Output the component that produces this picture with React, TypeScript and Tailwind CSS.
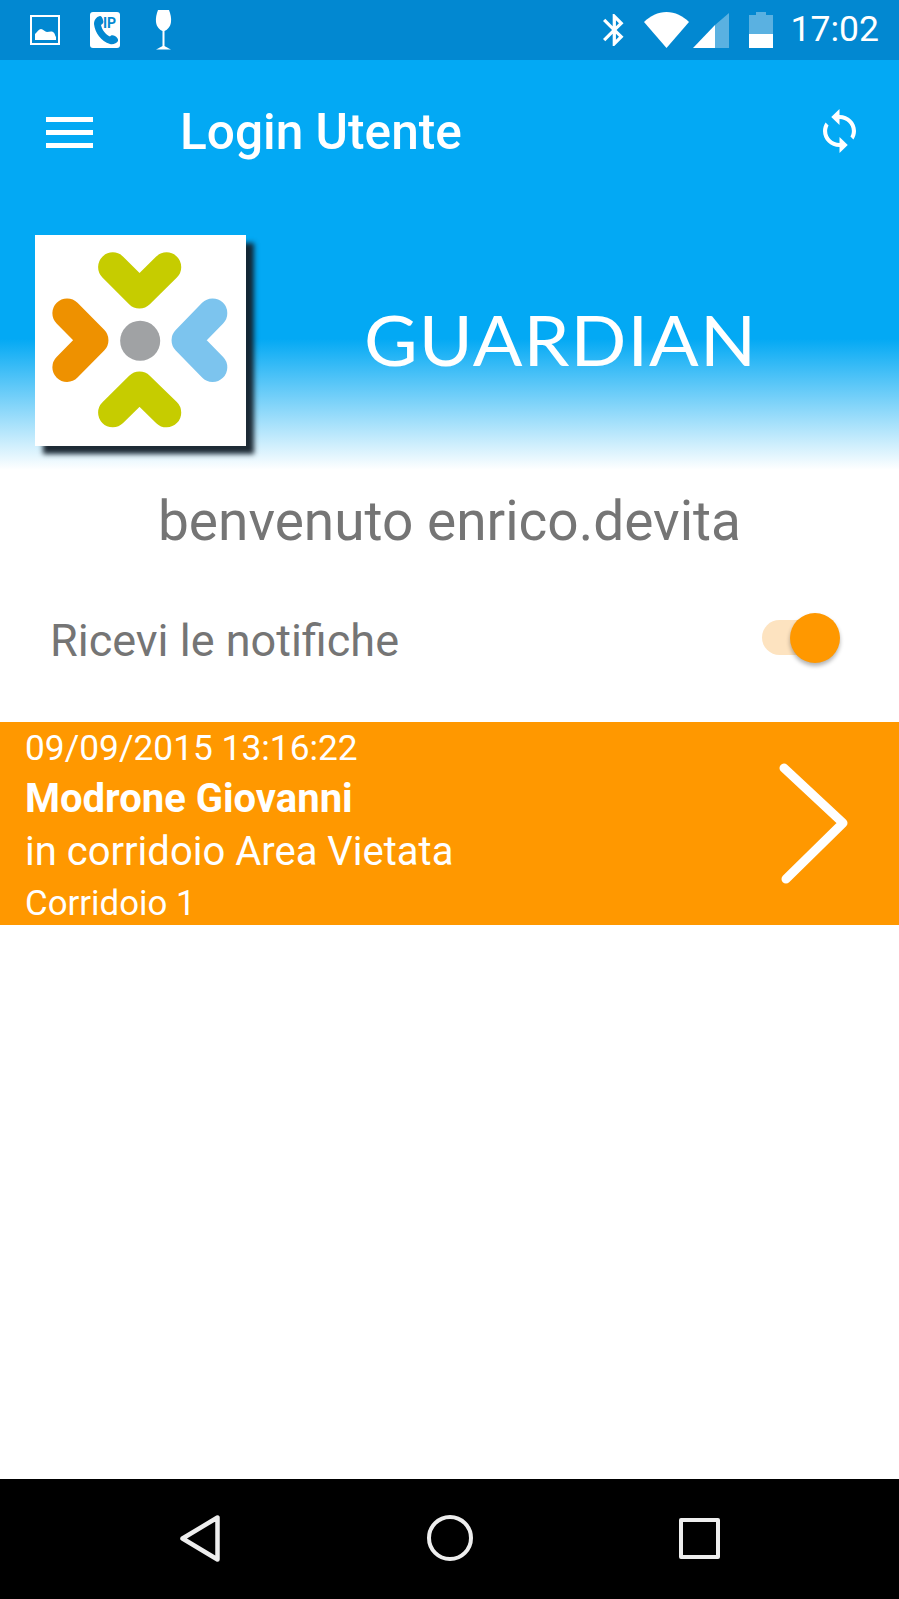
import React from "react";

function ImageIcon() {
  return (
    <svg width="31" height="31" viewBox="0 0 31 31" className="ml-[30px]">
      <rect x="1" y="1" width="28" height="28" fill="none" stroke="white" strokeWidth="2" />
      <path d="M5 25V19C7 17 9 14 11 14C13 14 15 17 17 17C19 17 21 16 23 17C25 18 25 21 26 22V25Z" fill="white" />
    </svg>
  );
}

function VoipIcon() {
  return (
    <svg width="31" height="36" viewBox="0 0 31 36" className="ml-[29px]">
      <rect width="30" height="36" rx="3" fill="white" />
      <path
        d="M10 4C6 5 4 8 4 12C5 21 11 29 20 32C23 33 27 31 28 29C28.500 27 27 25 25 24C23 23 21 23 20 24.500C16 23 12 18 11 13C13 12 14 10 13 8C12.500 6 11.500 4 10 4Z"
        fill="#0288d1"
      />
      <text x="13" y="16" fill="#0288d1" fontFamily="Roboto, sans-serif" fontWeight="700" fontSize="14">
        IP
      </text>
    </svg>
  );
}

function WineIcon() {
  return (
    <svg width="17" height="40" viewBox="0 0 17 40" className="ml-[34px]">
      <path
        d="M3 0H14C15.500 4 16.500 8 16 12C15.500 17 12 20 9.500 21V36C11 37 13 38 16 39.500H1C4 38 6 37 7.500 36V21C5 20 1.500 17 1 12C0.500 8 1.500 4 3 0Z"
        fill="white"
      />
    </svg>
  );
}

function StatusRight() {
  return (
    <div className="ml-auto flex items-center pr-[20px]">
      <svg width="21" height="32" viewBox="5 2 13 20" preserveAspectRatio="none">
        <path
          d="M17.710 7.710L12 2h-1v7.590L6.410 5 5 6.410 10.590 12 5 17.590 6.410 19 11 14.410V22h1l5.710-5.710-4.300-4.290 4.300-4.290zM13 5.830l1.880 1.880L13 9.590V5.830zm1.880 10.460L13 18.170v-3.760l1.880 1.880z"
          fill="white"
        />
      </svg>
      <svg width="45" height="36" viewBox="0 0 45 36" className="ml-[20px]">
        <path d="M0 10C6 4 14 0 22.500 0C31 0 39 4 45 10L22.500 36Z" fill="white" />
      </svg>
      <svg width="36" height="35" viewBox="0 0 36 35" className="ml-[4px]">
        <path d="M36 0V35H22V12Z" fill="white" fillOpacity="0.35" />
        <path d="M0 35L22 12V35Z" fill="white" />
      </svg>
      <svg width="24" height="36" viewBox="0 0 24 36" className="ml-[20px]">
        <path d="M7 0H17V3H24V22H0V3H7Z" fill="white" fillOpacity="0.35" />
        <rect y="22" width="24" height="14" fill="white" />
      </svg>
      <span className="ml-[18px] text-[35.500px] leading-none text-white">17:02</span>
    </div>
  );
}

function GuardianLogo() {
  return (
    <div className="h-[211px] w-[211px] shrink-0 bg-white shadow-[8px_8px_5px_rgba(20,32,42,0.95)]">
      <svg width="211" height="211" viewBox="45 45 632 632" fill="none" strokeWidth="88" strokeLinecap="round" strokeLinejoin="round">
        <path d="M278 141L358 221L439 141" stroke="#c6cc00" />
        <path d="M141 279L221 360L141 441" stroke="#ee9100" />
        <path d="M577 279L498 360L577 441" stroke="#7cc4ee" />
        <path d="M278 577L358 498L439 577" stroke="#c6cc00" />
        <circle cx="360" cy="362" r="60" fill="#a0a2a4" />
      </svg>
    </div>
  );
}

function NavBar() {
  return (
    <div className="flex h-[120px] shrink-0 items-center bg-black pb-[2px]">
      <svg width="40" height="47" viewBox="0 0 40 47" className="ml-[180px]" fill="none" stroke="#eeeeee" strokeWidth="4.500" strokeLinejoin="round">
        <path d="M2.500 23.500L37.500 2.500V44.500Z" />
      </svg>
      <div className="ml-[207px] h-[46px] w-[46px] rounded-full border-[4.500px] border-[#eeeeee]" />
      <div className="ml-[206px] h-[41px] w-[41px] rounded-[2px] border-[4.500px] border-[#eeeeee]" />
    </div>
  );
}

export default function App() {
  return (
    <div className="flex h-[1599px] w-[899px] flex-col overflow-hidden bg-white font-['Roboto',sans-serif]">
      <div className="flex h-[60px] shrink-0 items-center bg-[#0288d1]">
        <ImageIcon />
        <VoipIcon />
        <WineIcon />
        <StatusRight />
      </div>

      <div className="h-[410px] shrink-0 bg-[linear-gradient(#03a9f4_0%,#03a9f4_68%,#ffffff_100%)]">
        <div className="flex h-[145px] items-center">
          <div className="ml-[46px] flex w-[47px] flex-col gap-[8px]">
            <div className="h-[5px] bg-white" />
            <div className="h-[5px] bg-white" />
            <div className="h-[5px] bg-white" />
          </div>
          <h1 className="ml-[87px] text-[49.600px] font-medium leading-none text-white">Login Utente</h1>
          <svg width="33" height="44" viewBox="4 1 16 22" preserveAspectRatio="none" className="ml-auto mr-[43px] mt-[-3px]">
            <path
              d="M12 4V1L8 5l4 4V6c3.310 0 6 2.690 6 6 0 1.010-.250 1.970-.700 2.800l1.460 1.460C19.540 15.030 20 13.570 20 12c0-4.420-3.580-8-8-8zm0 14c-3.310 0-6-2.690-6-6 0-1.010.250-1.970.700-2.800L5.240 7.740C4.460 8.970 4 10.430 4 12c0 4.420 3.580 8 8 8v3l4-4-4-4v3z"
              fill="white"
            />
          </svg>
        </div>
        <div className="flex items-center pl-[35px] pt-[30px]">
          <GuardianLogo />
          <span className="ml-[118px] mt-[-4px] origin-left scale-x-[1.05] font-['Lato',sans-serif] text-[70px] font-normal leading-none tracking-[1px] text-white">
            GUARDIAN
          </span>
        </div>
      </div>

      <p className="mt-[20px] text-center text-[55px] leading-[62px] text-[#757575]">benvenuto enrico.devita</p>

      <div className="mt-[58px] flex h-[60px] items-center pl-[50px]">
        <span className="text-[45px] leading-none text-[#757575]">Ricevi le notifiche</span>
        <div className="relative ml-auto mr-[63px] mt-[-6px] h-[35px] w-[74px] rounded-full bg-[#fde3c0]">
          <div className="absolute right-[-4px] top-[-7px] h-[50px] w-[50px] rounded-full bg-[#ff9800] shadow-[0_3px_4px_rgba(0,0,0,0.3)]" />
        </div>
      </div>

      <div className="mt-[52px] flex h-[203px] items-center bg-[#ff9800] pl-[25px] pt-[2px] text-white">
        <div className="flex flex-col">
          <span className="text-[35.300px] leading-[50px]">09/09/2015 13:16:22</span>
          <span className="text-[40px] font-bold leading-[52px]">Modrone Giovanni</span>
          <span className="text-[40px] leading-[54px]">in corridoio Area Vietata</span>
          <span className="text-[34.800px] leading-[48px]">Corridoio 1</span>
        </div>
        <svg width="70" height="122" viewBox="0 0 70 122" fill="none" stroke="white" strokeWidth="9" strokeLinecap="round" strokeLinejoin="round" className="ml-auto mr-[50px] mt-[-2px]">
          <path d="M5 5L64 60L7 116" />
        </svg>
      </div>

      <div className="flex-1" />
      <NavBar />
    </div>
  );
}
